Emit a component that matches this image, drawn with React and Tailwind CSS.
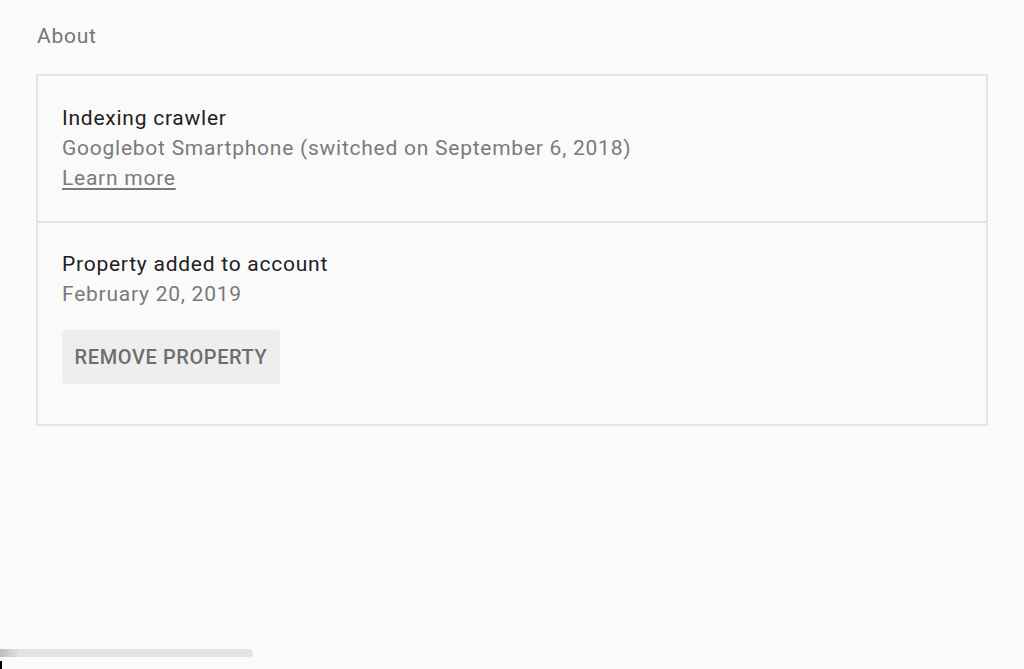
import React from 'react';

const Row = ({ children, className = '' }) => (
  <div className={`px-[24px] ${className}`}>{children}</div>
);

export default function App() {
  return (
    <div
      className="relative h-[669px] w-[1024px] overflow-hidden bg-[#fafafa]"
      style={{ fontFamily: 'Roboto, "Noto Sans", sans-serif' }}
    >
      <div className="pl-[36px] pr-[36px] pt-[21px]">
        <h2 className="pl-[1px] text-[21px] leading-[30px] tracking-[0.75px] text-[#767676]">About</h2>

        <div className="mt-[23px] border-2 border-[#e4e4e4]">
          <Row className="pt-[27px] pb-[28px] text-[21px] leading-[30px] tracking-[0.75px]">
            <div className="text-[#212121]">Indexing crawler</div>
            <div className="text-[#7a7a7a]">Googlebot Smartphone (switched on September 6, 2018)</div>
            <a href="#" className="text-[#7a7a7a] underline underline-offset-[3px]">
              Learn more
            </a>
          </Row>
          <div className="h-[2px] bg-[#e4e4e4]" />
          <Row className="pt-[26px] pb-[40px] text-[21px] leading-[30px] tracking-[0.75px]">
            <div className="text-[#212121]">Property added to account</div>
            <div className="text-[#7a7a7a]">February 20, 2019</div>
            <button className="mt-[21px] flex h-[54px] w-[218px] items-center justify-center rounded-[4px] bg-[#eeeeee] text-[20px] font-medium tracking-[0.6px] text-[#6e6e6e]">
              REMOVE PROPERTY
            </button>
          </Row>
        </div>
      </div>

      <div className="absolute bottom-[12px] left-0 h-[8px] w-[253px] rounded-r-full bg-gradient-to-r from-[#bdbdbd] via-[#e4e4e4] via-[8%] to-[#e4e4e4]" />
      <div className="absolute bottom-0 left-0 h-[8px] w-[6px] rounded-tl-[6px] bg-[#fafafa]">
        <div className="h-full w-[2px] bg-black" />
      </div>
    </div>
  );
}
